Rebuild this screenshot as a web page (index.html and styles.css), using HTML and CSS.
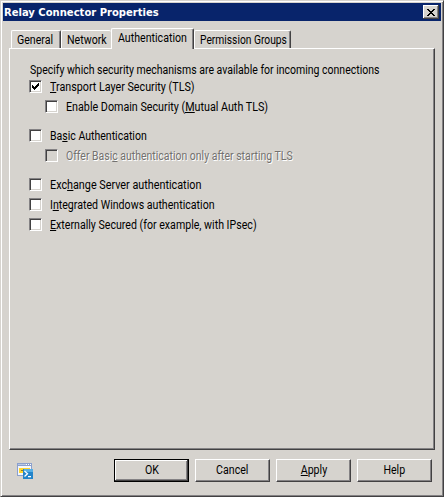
FILE: index.html
```html
<!DOCTYPE html>
<html lang="en">
<head>
<meta charset="utf-8">
<title>Relay Connector Properties</title>
<link rel="stylesheet" href="styles.css">
</head>
<body>
<div class="window">
  <header class="titlebar">
    <span class="title">Relay Connector Properties</span>
    <button class="close" aria-label="Close"><svg width="8" height="7" viewBox="0 0 8 7" shape-rendering="crispEdges"><path d="M0 0h2v1h1v1h2v-1h1v-1h2v1h-1v1h-1v1h-1v1h1v1h1v1h1v1h-2v-1h-1v-1h-2v1h-1v1h-2v-1h1v-1h1v-1h1v-1h-1v-1h-1v-1h-1z"/></svg></button>
  </header>
  <nav class="tabs">
    <div class="tab general"><span>General</span></div>
    <div class="tab network"><span>Network</span></div>
    <div class="tab active"><span>Authentication</span></div>
    <div class="tab groups"><span>Permission Groups</span></div>
  </nav>
  <main class="panel">
    <p class="intro"><span>Specify which security mechanisms are available for incoming connections</span></p>
    <label class="row"><i class="box"><svg width="7" height="7" viewBox="0 0 7 7" shape-rendering="crispEdges"><path d="M0 2h1v1h1v1h1v-1h1v-1h1v-1h1v-1h1v3h-1v1h-1v1h-1v1h-1v1h-1v-1h-1v-1h-1z"/></svg></i><span class="t-tls"><u>T</u>ransport Layer Security (TLS)</span></label>
    <label class="row sub"><i class="box"></i><span class="t-mutual">Enable Domain Security (<u>M</u>utual Auth TLS)</span></label>
    <label class="row gap"><i class="box"></i><span class="t-basic">Ba<u>s</u>ic Authentication</span></label>
    <label class="row sub disabled"><i class="box"></i><span class="t-offer">Offer Basi<u>c</u> authentication only after starting TLS</span></label>
    <label class="row gap"><i class="box"></i><span class="t-exchange">Exc<u>h</u>ange Server authentication</span></label>
    <label class="row"><i class="box"></i><span class="t-windows">I<u>n</u>tegrated Windows authentication</span></label>
    <label class="row"><i class="box"></i><span class="t-external"><u>E</u>xternally Secured (for example, with IPsec)</span></label>
  </main>
  <footer class="footer">
    <svg class="shell" width="16" height="16" viewBox="0 0 16 16">
      <path fill="#8ba0cd" d="M0 0h15v13H0z"/>
      <path fill="#f4f7fd" d="M1 3h13v9H1z"/>
      <path fill="#b8c7e5" d="M1 1h8v1H1z"/>
      <path fill="#fff" d="M9 1h1v1H9zM11 1h1v1h-1zM13 1h1v1h-1z"/>
      <path fill="#ffd52e" d="M2 5h11v5H2z"/>
      <path fill="#927b25" d="M4 7h4v1H4z"/>
      <path fill="#2384ca" d="M6 6h10v10H6z"/>
      <path fill="#55aee5" d="M7 6h9v3H7z"/>
      <path fill="none" stroke="#fff" stroke-width="1.3" d="M7.5 8l3 2.8-3 2.8M11 13.6h3"/>
    </svg>
    <button class="btn default"><span>OK</span></button>
    <button class="btn"><span>Cancel</span></button>
    <button class="btn"><span><u>A</u>pply</span></button>
    <button class="btn"><span>Help</span></button>
  </footer>
</div>
</body>
</html>
```
FILE: styles.css
```css
* { box-sizing: border-box; }

body {
  margin: 0;
  background: #d6d3ce;
  color: #000;
  font: 12px/14px Roboto, "Liberation Sans", sans-serif;
}

.window {
  width: 444px;
  height: 497px;
  padding: 1px;
  display: flex;
  flex-direction: column;
  border: 1px solid;
  border-color: #d6d3ce #424142 #424142 #d6d3ce;
  box-shadow: inset 1px 1px #fff, inset -1px -1px #848284;
}

.titlebar {
  display: flex;
  align-items: center;
  justify-content: space-between;
  height: 18px;
  margin: 1px 1px 0;
  padding: 0 2px 0 1px;
  background: #08246b;
  color: #fff;
  font: bold 11px/18px "DejaVu Sans Condensed", "DejaVu Sans", sans-serif;
}

.title {
  padding-top: 1px;
  white-space: nowrap;
  transform: scaleX(1.012);
  transform-origin: left;
}

button {
  margin: 0;
  padding: 0;
  border: 0;
  background: #d6d3ce;
  font: inherit;
  color: #000;
}

.close {
  width: 16px;
  height: 14px;
  display: flex;
  align-items: center;
  justify-content: center;
  box-shadow: inset -1px -1px #424142, inset 1px 1px #fff, inset -2px -2px #848284;
}

/* Condensed label text */
.tab span, .intro span, .row span, .btn span {
  display: inline-block;
  transform: scaleX(.885);
  transform-origin: left;
}

.btn span { transform-origin: center; }
.groups span { transform: scaleX(.855); }
.intro span { transform: scaleX(.875); }
.row .t-tls, .row .t-mutual { transform: scaleX(.894); }
.row .t-basic { transform: scaleX(.877); }
.row .t-offer { transform: scaleX(.873); }
.row .t-exchange { transform: scaleX(.9); }

.tabs {
  display: flex;
  align-items: flex-end;
  height: 27px;
  padding-left: 9px;
}

.tab {
  height: 18px;
  padding-left: 5px;
  border: 1px solid #fff;
  border-right-color: #424142;
  border-bottom: 0;
  border-radius: 2px 2px 0 0;
  box-shadow: inset -1px 0 #848284;
  line-height: 19px;
  white-space: nowrap;
}

.general { width: 50px; }
.network { width: 50px; border-right: 0; box-shadow: none; }
.groups { width: 97px; }

.active {
  z-index: 1;
  width: 83px;
  height: 21px;
  margin-bottom: -1px;
  padding-left: 6px;
  background: #d6d3ce;
}

.panel {
  width: 426px;
  height: 402px;
  margin-left: 7px;
  padding: 14px 0 0 19px;
  border: 1px solid;
  border-color: #fff #424142 #424142 #fff;
  box-shadow: inset -1px -1px #848284;
}

.intro {
  height: 14px;
  margin: 0 0 3px 1px;
  white-space: nowrap;
}

.row {
  display: flex;
  align-items: flex-start;
  gap: 8px;
  height: 13px;
  margin-bottom: 7px;
  white-space: nowrap;
}

.sub { margin-left: 16px; }
.gap { margin-top: 16px; }

u {
  text-decoration: none;
  background: linear-gradient(#000, #000) 0 12px / 100% 1px no-repeat;
}

.box {
  display: flex;
  align-items: center;
  justify-content: center;
  width: 13px;
  height: 13px;
  background: #fff;
  border: 1px solid;
  border-color: #848284 #fff #fff #848284;
  box-shadow: inset 1px 1px #424142, inset -1px -1px #d6d3ce;
}

.disabled { color: #73716f; text-shadow: 1px 1px #fff; }
.disabled .box { background: #d6d3ce; }
.disabled u { background-image: linear-gradient(#73716f, #73716f); }

.footer {
  display: flex;
  gap: 6px;
  margin: 9px 0 0 14px;
}

.shell { margin: 4px 75px 0 1px; }

.btn {
  width: 75px;
  height: 23px;
  border: 1px solid;
  border-color: #fff #424142 #424142 #fff;
  box-shadow: inset -1px -1px #848284;
  line-height: 21px;
}

.default {
  border-color: #000;
  box-shadow: inset -1px -1px #424142, inset 1px 1px #fff, inset -2px -2px #848284;
}
```
